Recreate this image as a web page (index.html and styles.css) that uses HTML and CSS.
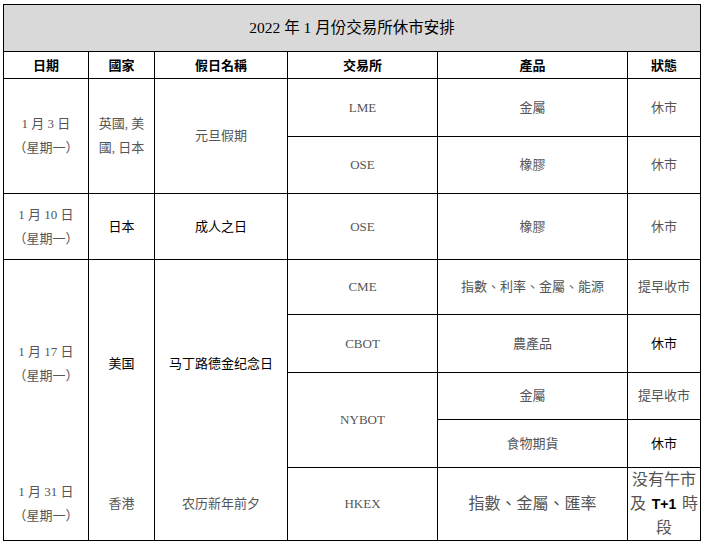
FILE: index.html
```html
<!DOCTYPE html>
<html lang="zh-Hant">
<head>
<meta charset="utf-8">
<link rel="stylesheet" href="styles.css">
</head>
<body>
<table class="sched">
  <colgroup>
    <col class="c-date"><col class="c-country"><col class="c-hol"><col class="c-ex"><col class="c-prod"><col class="c-stat">
  </colgroup>
  <tr class="r-title"><td colspan="6" class="title">2022 年 1 月份交易所休市安排</td></tr>
  <tr class="r-head">
    <th>日期</th><th>國家</th><th>假日名稱</th><th>交易所</th><th>產品</th><th>狀態</th>
  </tr>
  <tr class="r-58">
    <td rowspan="2" class="lat">1 月 3 日<br>（星期一）</td>
    <td rowspan="2">英國, 美國, 日本</td>
    <td rowspan="2">元旦假期</td>
    <td class="lat">LME</td>
    <td>金屬</td>
    <td>休市</td>
  </tr>
  <tr class="r-57">
    <td class="lat">OSE</td>
    <td>橡膠</td>
    <td>休市</td>
  </tr>
  <tr class="r-66">
    <td class="lat">1 月 10 日<br>（星期一）</td>
    <td class="dark">日本</td>
    <td class="dark">成人之日</td>
    <td class="lat">OSE</td>
    <td>橡膠</td>
    <td>休市</td>
  </tr>
  <tr class="r-55">
    <td rowspan="4" class="lat nobot">1 月 17 日<br>（星期一）</td>
    <td rowspan="4" class="dark nobot">美国</td>
    <td rowspan="4" class="dark nobot">马丁路德金纪念日</td>
    <td class="lat">CME</td>
    <td>指數、利率、金屬、能源</td>
    <td>提早收市</td>
  </tr>
  <tr class="r-58">
    <td class="lat">CBOT</td>
    <td>農產品</td>
    <td class="dark">休市</td>
  </tr>
  <tr class="r-47">
    <td rowspan="2" class="lat">NYBOT</td>
    <td>金屬</td>
    <td>提早收市</td>
  </tr>
  <tr class="r-48">
    <td>食物期貨</td>
    <td class="dark">休市</td>
  </tr>
  <tr class="r-73">
    <td class="lat notop">1 月 31 日<br>（星期一）</td>
    <td class="notop">香港</td>
    <td class="notop">农历新年前夕</td>
    <td class="lat">HKEX</td>
    <td class="big">指數、金屬、匯率</td>
    <td class="big stat3">
      <div class="ln">没有午市</div>
      <div class="ln spread"><span>及</span><b>T+1</b><span>時</span></div>
      <div class="ln">段</div>
    </td>
  </tr>
</table>
</body>
</html>
```

FILE: styles.css
```css
html, body {
  margin: 0;
  padding: 0;
  background: #ffffff;
}
body {
  padding: 4px 0 0 3px;
}
.sched {
  border-collapse: collapse;
  table-layout: fixed;
  width: 697px;
  font-family: "Liberation Serif", "Noto Sans CJK TC", serif;
  font-size: 13px;
  color: #555555;
}
.c-date { width: 85px; }
.c-country { width: 66px; }
.c-hol { width: 133px; }
.c-ex { width: 150px; }
.c-prod { width: 190px; }
.c-stat { width: 73px; }

.sched td, .sched th {
  border: 1px solid #000000;
  text-align: center;
  vertical-align: middle;
  padding: 0 5px;
  line-height: 24px;
}
.sched td.title {
  background: #d9d9d9;
  color: #000000;
  font-size: 15.5px;
  height: 46px;
  padding: 0;
}
.sched th {
  font-family: "Noto Sans CJK TC", sans-serif;
  font-weight: bold;
  font-size: 13px;
  color: #000000;
  height: 26px;
  line-height: 18px;
}
.r-58 > td { height: 57px; }
.r-57 > td { height: 56px; }
.r-66 > td { height: 65px; }
.r-55 > td { height: 54px; }
.r-47 > td { height: 46px; }
.r-48 > td { height: 47px; }
.r-73 > td { height: 72px; }
.sched td.dark { color: #000000; }
.sched td.nobot { border-bottom: hidden; }
.sched td.notop { border-top: hidden; }
.sched td.big { font-size: 16px; }
.sched td.stat3 {
  padding: 0 2px;
}
.ln {
  line-height: 24px;
}
.spread {
  display: flex;
  justify-content: space-between;
  align-items: baseline;
}
.spread b {
  font-family: "Liberation Sans", sans-serif;
  font-size: 14px;
  color: #000000;
}
```
